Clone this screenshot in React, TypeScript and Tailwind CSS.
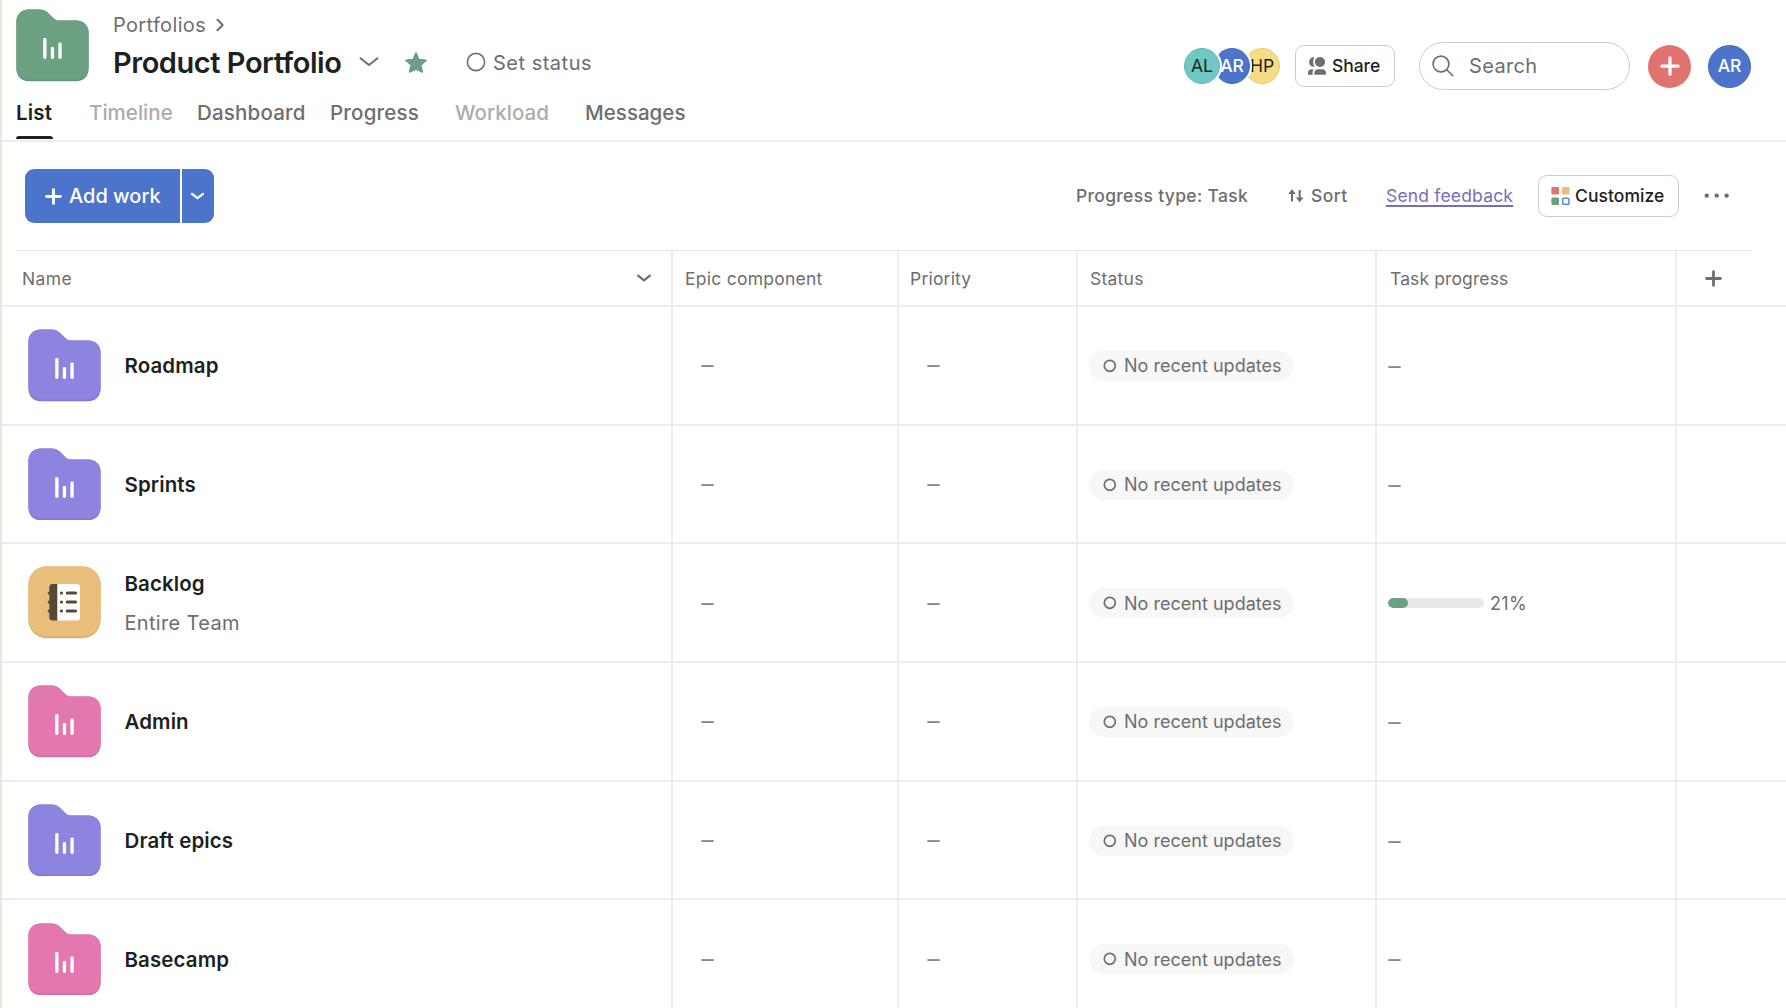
type IconProps = { className?: string };

function FolderIcon({ color, shade }: { color: string; shade: string }) {
  return (
    <svg viewBox="0 0 73 72.5" className="h-[72.5px] w-[73px] shrink-0">
      <path
        d="M12.5 .4H23.5C27 .4 29.3 1.2 31.6 3.5L37.2 9C38.9 10.7 40 11.4 42.5 11.4H60.5C67.5 11.4 72.6 16.4 72.6 23.4V60C72.6 67 67.5 72.2 60.5 72.2H12.5C5.5 72.2 .4 67 .4 60V12.4C.4 5.4 5.5 .4 12.5 .4Z"
        fill={shade}
      />
      <path
        d="M12.5 .4H23.5C27 .4 29.3 1.2 31.6 3.5L37.2 9C38.9 10.7 40 11.4 42.5 11.4H60.5C67.5 11.4 72.6 16.4 72.6 23.4V58.5C72.6 65.5 67.5 70.5 60.5 70.5H12.5C5.5 70.5 .4 65.5 .4 58.5V12.4C.4 5.4 5.5 .4 12.5 .4Z"
        fill={color}
      />
      <g fill="#fff">
        <rect x="27.2" y="29" width="3.3" height="21" rx="1.4" />
        <rect x="34.8" y="38" width="3.3" height="12" rx="1.4" />
        <rect x="42.4" y="33.5" width="3.3" height="16.5" rx="1.4" />
      </g>
    </svg>
  );
}

function NotebookTile() {
  return (
    <svg viewBox="0 0 73 72.5" className="h-[72.5px] w-[73px] shrink-0">
      <rect x=".4" y=".4" width="72.2" height="71.8" rx="18" fill="#d9ae6c" />
      <rect x=".4" y=".4" width="72.2" height="70" rx="18" fill="#e9bd7a" />
      <path d="M24.3 18H30V54.5H24.3C22.6 54.5 21.3 53.2 21.3 51.5V21C21.3 19.3 22.6 18 24.3 18Z" fill="#564a37" />
      <path d="M29.3 18H49C50.7 18 52 19.3 52 21V51.5C52 53.2 50.7 54.5 49 54.5H29.3Z" fill="#fff" />
      <g stroke="#564a37" strokeWidth="3.2" strokeLinecap="round">
        <path d="M21.3 27H23M21.3 36H23M21.3 45H23" />
        <path d="M33.4 27H33.5M33.4 36H33.5M33.4 45H33.5" />
        <path d="M39.3 27H47.5M39.3 36H47.5M39.3 45H47.5" />
      </g>
    </svg>
  );
}

function Chevron({ className }: IconProps) {
  return (
    <svg viewBox="0 0 20 12" className={className} fill="none" stroke="currentColor" strokeLinecap="round" strokeLinejoin="round">
      <path d="M1.5 2.3L10 9L18.5 2.3" />
    </svg>
  );
}

function Plus({ className }: IconProps) {
  return (
    <svg viewBox="0 0 16 16" className={className} fill="none" stroke="currentColor" strokeLinecap="round">
      <path d="M8 1.5V14.5M1.5 8H14.5" />
    </svg>
  );
}

function People() {
  return (
    <svg viewBox="0 0 18 18" className="h-[18px] w-[18px] shrink-0" fill="#6d6e6f">
      <path d="M6.6 .2C3.4 -.2 1.1 2 1.1 5S3.4 10 6.6 9.7C4.8 7.2 4.8 2.8 6.6 .2Z" />
      <ellipse cx="12" cy="5" rx="5.1" ry="5" />
      <path d="M0 17.8V15.9C0 13.6 1.4 12.2 3.7 12.2H5.6C4.8 13.2 4.6 14.3 4.6 15.6V17.8Z" />
      <path d="M6.3 17.8V16C6.3 13.7 7.8 12.2 10.1 12.2H14.2C16.5 12.2 18 13.7 18 16V17.8Z" />
    </svg>
  );
}

const tabs = [
  { label: "List", cls: "w-[38px] mr-[35px] tracking-[0.2px] font-semibold text-[#1e1f21]" },
  { label: "Timeline", cls: "w-[84px] mr-[24px] tracking-[0.03px] text-[#afabac]" },
  { label: "Dashboard", cls: "w-[108px] mr-[25px] tracking-[0.2px] text-[#6d6e6f]" },
  { label: "Progress", cls: "w-[89px] mr-[36px] tracking-[0.2px] text-[#6d6e6f]" },
  { label: "Workload", cls: "w-[94px] mr-[36px] tracking-[0.03px] text-[#afabac]" },
  { label: "Messages", cls: "w-[101px] tracking-[0.03px] text-[#6d6e6f]" },
];

type Row = { name: string; icon: "purple" | "pink" | "notebook"; team?: string; progress?: number };

const rows: Row[] = [
  { name: "Roadmap", icon: "purple" },
  { name: "Sprints", icon: "purple" },
  { name: "Backlog", icon: "notebook", team: "Entire Team", progress: 21 },
  { name: "Admin", icon: "pink" },
  { name: "Draft epics", icon: "purple" },
  { name: "Basecamp", icon: "pink" },
];

const columns = "grid grid-cols-[671px_226px_179px_299px_300px_109px]";
const cell = "flex items-center border-r-2 border-[#eeedec]";

function Dash() {
  return (
    <svg viewBox="0 0 13 4" className="mt-[2px] h-[4px] w-[13px]">
      <rect x=".3" y="1.2" width="12.4" height="1.7" fill="#7c7d7e" />
    </svg>
  );
}

function Header() {
  return (
    <header className="flex h-[142px] justify-between border-b-2 border-[#eeedec]">
      <div className="flex flex-col">
        <div className="flex h-[88px] pt-[9px] pl-[14px]">
          <FolderIcon color="#6ca083" shade="#619678" />
          <div className="ml-[24px] flex flex-col">
            <div className="flex h-[31px] items-center text-[20px] tracking-[0.35px] text-[#6d6e6f]">
              Portfolios
              <svg viewBox="0 0 8 14" className="ml-[10px] h-[14px] w-[8px]" fill="none" stroke="currentColor" strokeWidth="2" strokeLinecap="round" strokeLinejoin="round">
                <path d="M1.5 1.8L6.6 7L1.5 12.2" />
              </svg>
            </div>
            <div className="flex h-[44px] items-center">
              <h1 className="w-[229px] pt-[2px] text-[29px] font-semibold tracking-[-0.46px] whitespace-nowrap text-[#1e1f21]">Product Portfolio</h1>
              <Chevron className="ml-[17px] h-[12px] w-[20px] stroke-2 text-[#6d6e6f]" />
              <svg viewBox="0 0 22 21" className="ml-[26px] h-[21px] w-[22px]" fill="#6ca083" stroke="#6ca083" strokeWidth="1.6" strokeLinejoin="round">
                <path d="M11 1L13.9 7.5L21 8.3L15.7 13L17.4 20L11 17L4.6 20L6.3 13L1 8.3L8.1 7.5Z" />
              </svg>
              <svg viewBox="0 0 20 20" className="ml-[39px] h-[20px] w-[20px]" fill="none" stroke="#6d6e6f" strokeWidth="1.6">
                <circle cx="10" cy="10" r="8.6" />
              </svg>
              <span className="ml-[7px] pt-px text-[20px] tracking-[0.5px] text-[#6d6e6f]">Set status</span>
            </div>
          </div>
        </div>
        <nav className="flex h-[52px] pl-[14px] text-[20.5px] font-medium">
          {tabs.map((t, i) => (
            <div key={t.label} className={`${t.cls} flex flex-col whitespace-nowrap`}>
              <span className="flex h-[48px] items-center pt-[2px]">{t.label}</span>
              {i === 0 && <span className="h-[3px] w-[37px] shrink-0 rounded-t-sm bg-[#1e1f21]" />}
            </div>
          ))}
        </nav>
      </div>

      <div className="flex h-[132px] items-center pr-[35px]">
        <div className="flex items-center text-[17.5px] text-[#1e1f21]">
          <span className="z-20 flex h-9 w-9 items-center justify-center rounded-full border border-[#66b9b3] bg-[#70c8c2] ring-2 ring-white">AL</span>
          <span className="z-10 -ml-[6px] flex h-9 w-9 items-center justify-center rounded-full border border-[#466bc0] bg-[#4d74cb] font-medium text-white ring-2 ring-white">AR</span>
          <span className="-ml-[6px] flex h-9 w-9 items-center justify-center rounded-full border border-[#e6cb76] bg-[#f5dd83]">HP</span>
        </div>
        <button className="ml-[15px] flex h-[42px] w-[100px] items-center rounded-[9px] border-[1.6px] border-[#cfcbcb] pl-[12px] text-[17.5px] font-medium text-[#1e1f21]">
          <People />
          <span className="ml-[6px] pt-px tracking-[-0.05px]">Share</span>
        </button>
        <div className="ml-[24px] flex h-[48px] w-[211px] items-center rounded-full border-[1.6px] border-[#cfcbcb] pl-[12px] text-[20px] text-[#6d6e6f]">
          <svg viewBox="0 0 22 22" className="h-[22px] w-[22px]" fill="none" stroke="currentColor" strokeWidth="1.6" strokeLinecap="round">
            <circle cx="9" cy="9" r="7.9" />
            <path d="M14.8 14.8L20.8 20.8" />
          </svg>
          <span className="ml-[15px] tracking-[0.35px]">Search</span>
        </div>
        <button className="ml-[18px] flex h-[43px] w-[43px] items-center justify-center rounded-full bg-[#e2726e] text-white">
          <Plus className="h-[20px] w-[20px] stroke-[2.6]" />
        </button>
        <span className="ml-[17px] flex h-[43px] w-[43px] items-center justify-center rounded-full border border-[#466bc0] bg-[#4d74cb] text-[17.5px] font-medium text-white">AR</span>
      </div>
    </header>
  );
}

function Toolbar() {
  return (
    <div className="flex h-[108px] items-center justify-between pr-[56px] pl-[23px]">
      <div className="flex h-[54px] gap-[1.5px] text-[20px] font-medium text-white">
        <button className="flex w-[155px] items-center rounded-l-[9px] bg-[#4d74cb] pl-[20px] whitespace-nowrap">
          <Plus className="h-[17px] w-[17px] stroke-[2.7]" />
          <span className="ml-[7px]">Add work</span>
        </button>
        <button className="flex w-[32.5px] items-center justify-center rounded-r-[9px] bg-[#4d74cb]">
          <Chevron className="h-[8.5px] w-[13px] stroke-[3.4]" />
        </button>
      </div>
      <div className="flex items-center text-[17.5px] font-medium whitespace-nowrap text-[#6d6e6f]">
        <span className="w-[212px] pt-px tracking-[0.32px]">Progress type: Task</span>
        <span className="flex w-[98px] items-center">
          <svg viewBox="0 0 16 14" className="h-[14px] w-[16px]" fill="currentColor">
            <path d="M4 0.3L7.8 4.9H5V12.6H3V4.9H0.2Z" />
            <path d="M11.7 13.2L15.5 8.6H12.7V0.9H10.7V8.6H7.9Z" />
          </svg>
          <span className="ml-[7px] pt-px tracking-[0.4px]">Sort</span>
        </span>
        <a className="w-[127px] pt-px font-normal tracking-[0.18px] text-[#796eb9] underline decoration-[1.5px] underline-offset-[3px]">Send feedback</a>
        <button className="ml-[25px] flex h-[42px] w-[141px] items-center rounded-[9px] border-[1.6px] border-[#cfcbcb] pl-[12px] text-[#1e1f21]">
          <svg viewBox="0 0 19 18" className="h-[18px] w-[19px]">
            <rect x=".4" y="0" width="7.6" height="7.4" rx="1.2" fill="#e2726e" />
            <rect x="11" y="0" width="7.6" height="7.4" rx="1.2" fill="#e9bd7a" />
            <rect x=".4" y="10.5" width="7.6" height="7.4" rx="1.2" fill="#6ca083" />
            <rect x="11.7" y="11.2" width="6.2" height="6" rx=".8" fill="none" stroke="#5c86e0" strokeWidth="1.5" />
          </svg>
          <span className="ml-[5px] pt-px tracking-[0.05px]">Customize</span>
        </button>
        <svg viewBox="0 0 26 6" className="ml-[25px] h-[6px] w-[26px]" fill="#6d6e6f">
          <circle cx="2.8" cy="2.6" r="2.2" />
          <circle cx="12.7" cy="2.6" r="2.2" />
          <circle cx="22.6" cy="2.6" r="2.2" />
        </svg>
      </div>
    </div>
  );
}

function TableRow({ row }: { row: Row }) {
  return (
    <div className={`${columns} h-[118.7px] border-b-2 border-[#eeedec]`}>
      <div className={`${cell} pl-[26px]`}>
        {row.icon === "notebook" && <NotebookTile />}
        {row.icon === "purple" && <FolderIcon color="#8d84e0" shade="#8379d2" />}
        {row.icon === "pink" && <FolderIcon color="#e377b0" shade="#d36da3" />}
        <div className="ml-[23.5px] flex flex-col pt-[1.5px]">
          <span className="text-[20.5px] leading-[30px] font-semibold tracking-[0.1px] text-[#1e1f21]">{row.name}</span>
          {row.team && <span className="mt-[9px] text-[20px] leading-[30px] tracking-[0.33px] text-[#6d6e6f]">{row.team}</span>}
        </div>
      </div>
      <div className={`${cell} pl-[28px]`}>
        <Dash />
      </div>
      <div className={`${cell} pl-[28px]`}>
        <Dash />
      </div>
      <div className={`${cell} pt-px pl-[11px]`}>
        <span className="flex h-[30px] w-[205px] items-center rounded-full bg-[#f7f7f7] pl-[14px] text-[18px] text-[#6d6e6f]">
          <svg viewBox="0 0 14 14" className="h-[14px] w-[14px]" fill="none" stroke="currentColor" strokeWidth="1.7">
            <circle cx="6.8" cy="6.8" r="5.5" />
          </svg>
          <span className="ml-[7px] whitespace-nowrap tracking-[0.02px]">No recent updates</span>
        </span>
      </div>
      <div className={`${cell} pt-px pl-[11px]`}>
        {row.progress === undefined ? (
          <Dash />
        ) : (
          <>
            <span className="h-[9.5px] w-[96px] overflow-hidden rounded-full bg-[#ebe9e8]">
              <span className="block h-full rounded-full bg-[#6ca083]" style={{ width: `${row.progress}%` }} />
            </span>
            <span className="ml-[6px] text-[18px] tracking-[0.3px] text-[#6d6e6f]">{row.progress}%</span>
          </>
        )}
      </div>
      <div />
    </div>
  );
}

export default function App() {
  return (
    <div className="h-[1008px] w-[1786px] overflow-hidden border-l-2 border-[#ebe5dc] bg-white font-['Inter',sans-serif]">
      <Header />
      <Toolbar />
      <div className="mr-[34px] ml-[14px] h-px bg-[#e6e4e3]" />
      <div className={`${columns} h-[56px] border-b-2 border-[#eeedec] text-[17.5px] text-[#6d6e6f]`}>
        <div className={`${cell} justify-between pr-[20px] pl-[20px]`}>
          <span className="pt-[2px] tracking-[0.39px]">Name</span>
          <Chevron className="h-[8.5px] w-[14px] stroke-[3.2]" />
        </div>
        <div className={`${cell} pt-[2px] pl-[12px] tracking-[0.25px]`}>Epic component</div>
        <div className={`${cell} pt-[2px] pl-[11px] tracking-[0.2px]`}>Priority</div>
        <div className={`${cell} pt-[2px] pl-[12px] tracking-[0.25px]`}>Status</div>
        <div className={`${cell} pt-[2px] pl-[13px] tracking-[0.12px]`}>Task progress</div>
        <div className="flex items-center pl-[28px]">
          <Plus className="h-[17px] w-[17px] stroke-[2.6]" />
        </div>
      </div>
      {rows.map((r) => (
        <TableRow key={r.name} row={r} />
      ))}
    </div>
  );
}
